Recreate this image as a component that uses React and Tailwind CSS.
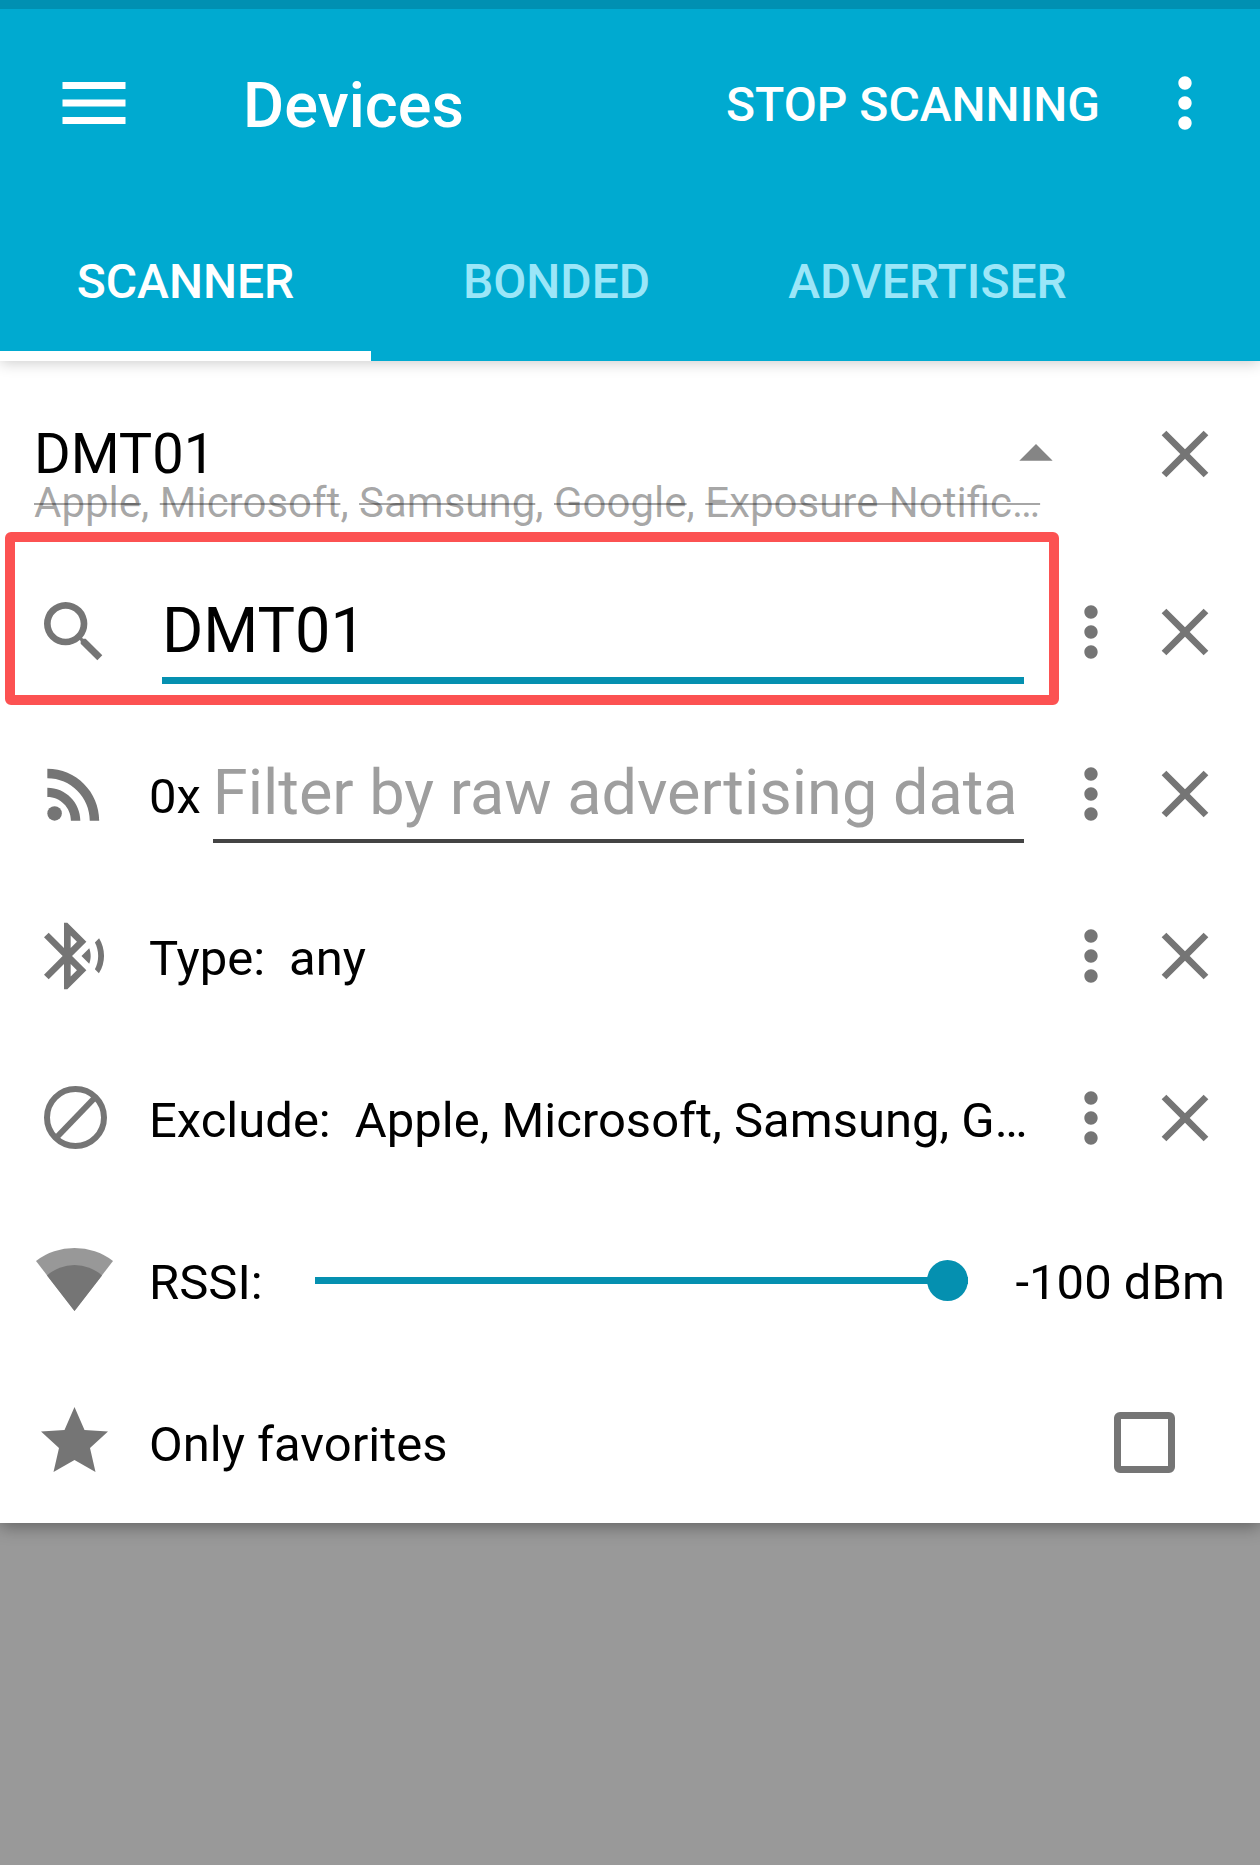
import React, { useState } from "react";
import { MdArrowDropUp, MdBluetoothSearching, MdClose, MdMenu, MdMoreVert, MdRssFeed, MdSearch } from "react-icons/md";

const tabs = ["SCANNER", "BONDED", "ADVERTISER"];
const excluded = ["Apple", "Microsoft", "Samsung", "Google", "Exposure Notific…"];

function ExcludeIcon() {
    return (
        <svg viewBox="0 0 80 80" className="size-20" fill="none" stroke="currentColor" strokeWidth="6" aria-hidden="true">
            <circle cx="41.5" cy="39.5" r="28.5" />
            <path d="M61 19.5 22 60" />
        </svg>
    );
}

function SignalIcon() {
    return (
        <svg viewBox="0 0 80 80" className="size-20" fill="currentColor" aria-hidden="true">
            <path d="M2 21A63.5 63.5 0 0 1 79 21L40.5 71Z" opacity=".75" />
            <path d="M13 35.5A41 41 0 0 1 68 35.5L40.5 71Z" />
        </svg>
    );
}

function StarIcon() {
    return (
        <svg viewBox="0 0 80 80" className="size-20" fill="currentColor" aria-hidden="true">
            <path d="M40.5 5 50.5 28 74 29.5 56 46 61.5 70 40.5 58 19.5 70 25 46 7 29.5 30.5 28Z" />
        </svg>
    );
}

function Actions({ name }) {
    return (
        <div className="ml-[27px] flex shrink-0 gap-[14px] text-[#757575]">
            <button type="button" aria-label={`${name} history`} className="cursor-pointer">
                <MdMoreVert className="size-20" />
            </button>
            <button type="button" aria-label={`Clear ${name}`} className="cursor-pointer">
                <MdClose className="size-20" />
            </button>
        </div>
    );
}

function Row({ icon, children }) {
    return (
        <div className="relative flex h-[162px] items-center pr-[35px] pl-[34px] text-[49px]">
            <span className="mr-[35px] shrink-0 text-[#757575]">{icon}</span>
            {children}
        </div>
    );
}

export default function App() {
    const [tab, setTab] = useState("SCANNER");
    const [name, setName] = useState("DMT01");
    const [raw, setRaw] = useState("");
    const [rssi, setRssi] = useState(100);
    const [favorites, setFavorites] = useState(false);

    return (
        <div className="min-h-screen bg-[#999999] font-['Roboto',sans-serif] text-5xl text-black">
            <header className="relative z-10 border-t-[9px] border-[#0090b2] bg-[#00aad0] text-white shadow-[0_2px_14px_rgba(0,0,0,0.2)]">
                <div className="flex h-[188px] items-center pr-[35px] pl-[52px]">
                    <button type="button" aria-label="Menu" className="cursor-pointer">
                        <MdMenu className="size-[84px]" />
                    </button>
                    <h1 className="ml-[107px] pt-1 text-[63px] font-medium">Devices</h1>
                    <button type="button" className="mr-[45px] ml-auto cursor-pointer pt-1 font-medium">STOP SCANNING</button>
                    <button type="button" aria-label="More options" className="cursor-pointer">
                        <MdMoreVert className="size-20" />
                    </button>
                </div>

                <nav className="flex">
                    {tabs.map((t) => (
                        <button
                            key={t}
                            type="button"
                            onClick={() => setTab(t)}
                            className={`${tab === t ? "border-white text-white" : "border-transparent text-[#9be6f8]"} h-[164px] w-[371px] cursor-pointer border-b-10 pt-4 font-medium`}
                        >
                            {t}
                        </button>
                    ))}
                </nav>
            </header>

            <main className="bg-white shadow-[0_4px_16px_rgba(0,0,0,0.35)]">
                <section className="pt-[65px] pr-[35px] pb-[27px] pl-[34px]">
                    <div className="flex h-14 items-center">
                        <h2 className="mr-auto text-[56px] leading-14">{name}</h2>
                        <button type="button" aria-label="Collapse filters" className="mr-[69px] cursor-pointer text-[#858585]">
                            <MdArrowDropUp className="size-20" />
                        </button>
                        <button type="button" aria-label="Clear filters" className="cursor-pointer text-[#757575]">
                            <MdClose className="size-20" />
                        </button>
                    </div>
                    <p className="text-[42px] leading-[42px] whitespace-nowrap text-black/35">
                        {excluded.map((item, i) => (
                            <React.Fragment key={item}>
                                {i > 0 && ", "}
                                <s className="decoration-2">{item}</s>
                            </React.Fragment>
                        ))}
                    </p>
                </section>

                <Row icon={<MdSearch className="size-20" />}>
                    <div className="pointer-events-none absolute -top-[19px] right-[201px] left-[5px] h-[173px] rounded-md border-10 border-[#fc5252]"></div>
                    <input
                        type="text"
                        aria-label="Filter by name or address"
                        value={name}
                        onChange={(e) => setName(e.target.value)}
                        className="ml-[13px] h-[104px] min-w-0 flex-1 border-b-[7px] border-[#0590b0] pt-1 text-[63px] outline-none"
                    />
                    <Actions name="name filter" />
                </Row>

                <Row icon={<MdRssFeed className="size-20" />}>
                    <label htmlFor="raw" className="mr-3 pt-1">0x</label>
                    <input
                        id="raw"
                        type="text"
                        value={raw}
                        onChange={(e) => setRaw(e.target.value)}
                        placeholder="Filter by raw advertising data"
                        className="h-[98px] min-w-0 flex-1 border-b-4 border-[#444444] text-[63px] outline-none placeholder:text-[#9e9e9e]"
                    />
                    <Actions name="raw data filter" />
                </Row>

                <Row icon={<MdBluetoothSearching className="size-20" />}>
                    <span className="mr-6 pt-1">Type:</span>
                    <span className="min-w-0 flex-1 pt-1 whitespace-nowrap">any</span>
                    <Actions name="type filter" />
                </Row>

                <Row icon={<ExcludeIcon />}>
                    <span className="mr-6 pt-1">Exclude:</span>
                    <span className="min-w-0 flex-1 pt-1 whitespace-nowrap">Apple, Microsoft, Samsung, G…</span>
                    <Actions name="exclude filter" />
                </Row>

                <Row icon={<SignalIcon />}>
                    <label htmlFor="rssi" className="pt-1">RSSI:</label>
                    <input
                        id="rssi"
                        type="range"
                        min="40"
                        max="100"
                        value={rssi}
                        onChange={(e) => setRssi(e.target.value)}
                        className="mr-12 ml-13 h-10 min-w-0 flex-1 cursor-pointer appearance-none bg-transparent [&::-webkit-slider-runnable-track]:h-[7px] [&::-webkit-slider-runnable-track]:bg-[#0590b0] [&::-webkit-slider-thumb]:-mt-[17px] [&::-webkit-slider-thumb]:size-[41px] [&::-webkit-slider-thumb]:appearance-none [&::-webkit-slider-thumb]:rounded-full [&::-webkit-slider-thumb]:bg-[#0590b0]"
                    />
                    <output htmlFor="rssi" className="pt-1 whitespace-nowrap">-{rssi} dBm</output>
                </Row>

                <Row icon={<StarIcon />}>
                    <label htmlFor="favorites" className="mr-auto pt-1">Only favorites</label>
                    <input
                        id="favorites"
                        type="checkbox"
                        checked={favorites}
                        onChange={(e) => setFavorites(e.target.checked)}
                        className="mr-[50px] size-[61px] cursor-pointer appearance-none rounded-md border-[7px] border-[#757575] checked:bg-[#0590b0]"
                    />
                </Row>
            </main>
        </div>
    );
}
